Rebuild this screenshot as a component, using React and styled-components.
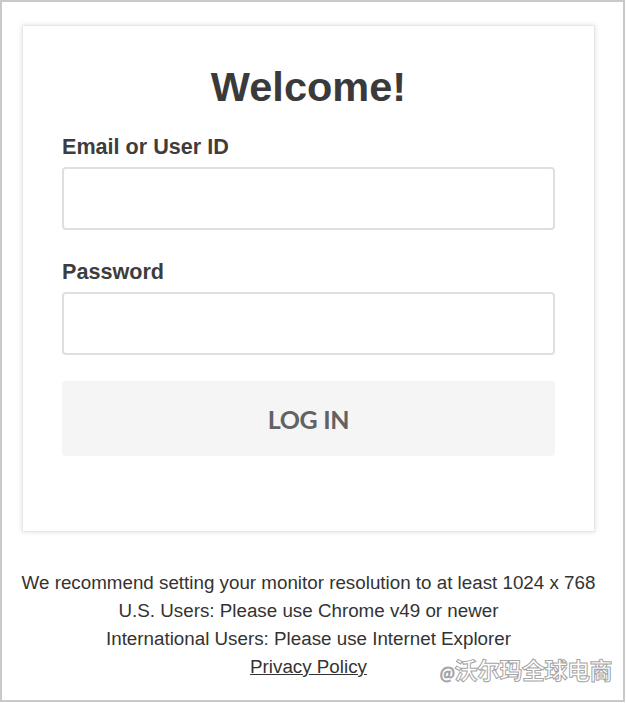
import styled, { createGlobalStyle } from 'styled-components';

const GlobalStyle = createGlobalStyle`
  html, body {
    margin: 0;
    padding: 0;
    background: #fff;
  }
  * {
    box-sizing: border-box;
  }
`;

const Frame = styled.div`
  position: relative;
  width: 625px;
  height: 702px;
  border: 2px solid #c9c9c9;
  padding: 23px 0 0 20px;
  font-family: "Liberation Sans", Arial, sans-serif;
  overflow: hidden;
`;

const Column = styled.div`
  width: 573px;
  display: flex;
  flex-direction: column;
  align-items: stretch;
`;

const Card = styled.form`
  border: 1px solid #e8e8e8;
  box-shadow: 0 0 5px rgba(0, 0, 0, 0.13);
  background: #fff;
  padding: 37px 39px 75px;
  display: flex;
  flex-direction: column;
`;

const Title = styled.h1`
  margin: 0 0 24px;
  font-size: 41.5px;
  line-height: 48px;
  font-weight: 700;
  color: #3a3a3a;
  text-align: center;
`;

const Field = styled.div`
  display: flex;
  flex-direction: column;
  gap: 8px;
  margin-bottom: ${props => props.last ? '26px' : '30px'};
`;

const Label = styled.label`
  font-size: 21.6px;
  line-height: 24px;
  font-weight: 700;
  color: #3d3d3d;
`;

const Input = styled.input`
  height: 63px;
  width: 100%;
  border: 2px solid #dce0e0;
  border-radius: 4px;
  background: #fff;
  outline: none;
  font-size: 18px;
  padding: 0 14px;
`;

const LoginButton = styled.button`
  height: 75px;
  width: 100%;
  border: none;
  border-radius: 4px;
  background: #f5f5f5;
  color: #626262;
  font-family: Lato, "Liberation Sans", sans-serif;
  font-weight: 700;
  font-size: 25px;
  letter-spacing: -0.3px;
  cursor: pointer;
`;

const Footer = styled.div`
  margin-top: 37px;
  display: flex;
  flex-direction: column;
  align-items: center;
  font-size: 18.8px;
  line-height: 28px;
  color: #333;
  white-space: nowrap;
`;

const FooterLink = styled.a`
  color: #333;
  text-decoration: underline;
`;

const Watermark = styled.div`
  position: absolute;
  right: 11px;
  bottom: 14px;
  font-family: "Noto Sans CJK SC", sans-serif;
  font-size: 23px;
  line-height: 28px;
  font-weight: 700;
  color: rgba(255, 255, 255, 0.92);
  -webkit-text-stroke: 1px rgba(140, 140, 140, 0.8);
  letter-spacing: -0.5px;
`;

const At = styled.span`
  font-size: 16px;
  font-weight: 400;
`;

const App = () => {
  return (
    <>
      <GlobalStyle />
      <Frame>
        <Column>
          <Card onSubmit={e => e.preventDefault()}>
            <Title>Welcome!</Title>
            <Field>
              <Label htmlFor="user">Email or User ID</Label>
              <Input id="user" type="text" />
            </Field>
            <Field last>
              <Label htmlFor="pass">Password</Label>
              <Input id="pass" type="password" />
            </Field>
            <LoginButton type="submit">LOG IN</LoginButton>
          </Card>
          <Footer>
            <span>We recommend setting your monitor resolution to at least 1024 x 768</span>
            <span>U.S. Users: Please use Chrome v49 or newer</span>
            <span>International Users: Please use Internet Explorer</span>
            <FooterLink href="#">Privacy Policy</FooterLink>
          </Footer>
        </Column>
        <Watermark><At>@</At>沃尔玛全球电商</Watermark>
      </Frame>
    </>
  );
};

export default App;
